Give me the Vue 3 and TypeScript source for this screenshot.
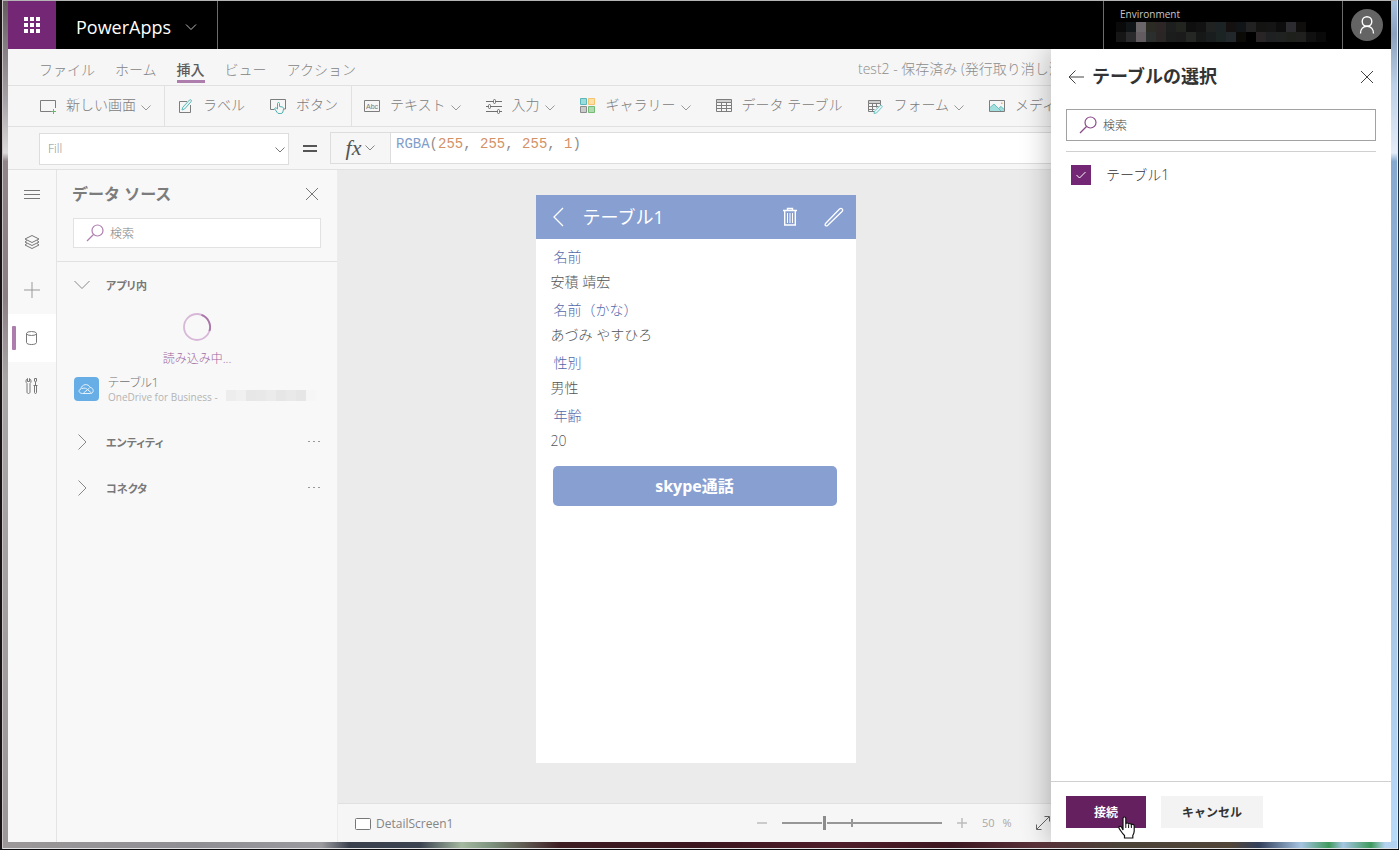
<script setup lang="ts">
import { ref } from 'vue'

type Tool = { id: string; label: string; menu: boolean; divider: boolean }

const menus = ['ファイル', 'ホーム', '挿入', 'ビュー', 'アクション']
const activeMenu = ref('挿入')

const tools: Tool[] = [
  { id: 'screen', label: '新しい画面', menu: true, divider: true },
  { id: 'label', label: 'ラベル', menu: false, divider: false },
  { id: 'button', label: 'ボタン', menu: false, divider: true },
  { id: 'text', label: 'テキスト', menu: true, divider: false },
  { id: 'input', label: '入力', menu: true, divider: false },
  { id: 'gallery', label: 'ギャラリー', menu: true, divider: false },
  { id: 'table', label: 'データ テーブル', menu: false, divider: false },
  { id: 'form', label: 'フォーム', menu: true, divider: false },
  { id: 'media', label: 'メディア', menu: true, divider: false },
]

const rail = [
  { id: 'menu', name: 'メニュー' },
  { id: 'layers', name: 'ツリー ビュー' },
  { id: 'plus', name: '挿入' },
  { id: 'data', name: 'データ ソース' },
  { id: 'tools', name: '詳細ツール' },
]
const activeRail = ref('data')

const groups = ['エンティティ', 'コネクタ']

const fields = [
  { name: '名前', value: '安積 靖宏' },
  { name: '名前（かな）', value: 'あづみ やすひろ' },
  { name: '性別', value: '男性' },
  { name: '年齢', value: '20' },
]

const formula = ref('RGBA(255, 255, 255, 1)')
const tokens = [
  { t: 'RGBA', c: 'fn' },
  { t: '(', c: 'op' },
  { t: '255', c: 'num' },
  { t: ', ', c: 'op' },
  { t: '255', c: 'num' },
  { t: ', ', c: 'op' },
  { t: '255', c: 'num' },
  { t: ', ', c: 'op' },
  { t: '1', c: 'num' },
  { t: ')', c: 'op' },
]

const zoomValue = ref(26)
const checked = ref(true)

const envCells = [
  '#0a0a0a', '#101518', '#6a6568', '#2b2b24', '#2c2626', '#1d1f1f', '#22241f', '#0f0f0f', '#121212', '#202222', '#1b2325',
  '#151110', '#121517', '#222222', '#141513', '#151515', '#0d0d0d', '#2c2c30', '#0f0e0d', '#000000', '#000000',
  '#161617', '#2a2a2c', '#625c60', '#2a2e2d', '#2a2626', '#1b1d1d', '#1a1b1a', '#252725', '#151817', '#1a1d1d', '#1c2323',
  '#21272b', '#0b0a07', '#000000', '#292527', '#1f2021', '#202222', '#1e201c', '#20201e', '#101010', '#090909',
]
const accountCells = ['#ededed', '#f0f0f0', '#e7e7e7', '#e8e8e8', '#ebebeb', '#e6e6e6', '#e9e9e9', '#e6e6e6', '#f6f6f6']
</script>

<template>
  <div class="frame">
    <div class="app">
      <header class="topbar">
        <button class="waffle" aria-label="アプリ起動ツール">
          <svg width="16" height="16" viewBox="0 0 16 16" fill="#fff">
            <path d="M0 0h4v4H0zM6 0h4v4H6zM12 0h4v4h-4zM0 6h4v4H0zM6 6h4v4H6zM12 6h4v4h-4zM0 12h4v4H0zM6 12h4v4H6zM12 12h4v4h-4z" />
          </svg>
        </button>
        <button class="brand">
          PowerApps
          <svg width="12" height="8" viewBox="0 0 12 8" fill="none" stroke="#bbb"><path d="M1 1.5l5 5 5-5" /></svg>
        </button>
        <div class="env">
          <span>Environment</span>
          <div class="env-cells"><i v-for="(c, i) in envCells" :key="i" :style="{ background: c }"></i></div>
        </div>
        <button class="account" aria-label="アカウント">
          <svg width="32" height="32" viewBox="0 0 32 32" fill="none" stroke="#fff" stroke-width="1.4">
            <circle cx="16" cy="16" r="16" fill="#646464" stroke="none" />
            <circle cx="16" cy="12.5" r="4.8" />
            <path d="M9.5 24.5c0-4.4 2.7-7.2 6.500-7.200s6.500 2.800 6.500 7.200" />
          </svg>
        </button>
      </header>

      <nav class="menubar">
        <button v-for="m in menus" :key="m" :class="{ on: m === activeMenu }" @click="activeMenu = m"><span>{{ m }}</span></button>
        <p class="doc">test2 - 保存済み (発行取り消し済み)</p>
      </nav>

      <div class="toolbar">
        <template v-for="t in tools" :key="t.id">
          <button class="tool">
            <svg v-if="t.id === 'screen'" class="ti" width="16" height="16" viewBox="0 0 16 16" fill="none" stroke="#7d7d7d">
              <path d="M11 13.500H.5v-11h15V10" /><path stroke="#6cb56c" d="M13.500 11v5M11 13.500h5" />
            </svg>
            <svg v-else-if="t.id === 'label'" class="ti" width="16" height="16" viewBox="0 0 16 16" fill="none" stroke="#7d7d7d">
              <path d="M10 3.500H2.500v11h11V7" /><path stroke="#5fb8b8" fill="#e4f5f5" d="M5 12l.8-2.800L12.500 2c1.200-1 2.600.4 1.600 1.600L7.600 11z" />
            </svg>
            <svg v-else-if="t.id === 'button'" class="ti" width="16" height="16" viewBox="0 0 16 16" fill="none" stroke="#7d7d7d">
              <path d="M4.500 11.500h-4v-10h15v9.500H14" />
              <path stroke="#4cb0b0" fill="#f6f6f6" d="M7.500 11V5.500c0-1.300 2-1.300 2 0V8.500l3 .6c1 .3 1.200.9 1 1.900l-.6 3c-.3 1-1 1.500-2 1.500H9c-1 0-1.500-.5-2-1.200L4.800 11c-.4-1 .7-1.600 1.500-1z" />
            </svg>
            <svg v-else-if="t.id === 'text'" class="ti" width="16" height="16" viewBox="0 0 16 16" fill="none" stroke="#7d7d7d">
              <path d="M.5 2.500h15v11H.5z" />
              <text x="8" y="11" text-anchor="middle" font-size="7" font-family="Liberation Sans, sans-serif" fill="#777" stroke="none">Abc</text>
            </svg>
            <svg v-else-if="t.id === 'input'" class="ti" width="16" height="16" viewBox="0 0 16 16" fill="none" stroke="#707070">
              <path d="M0 3.500h7M10 3.500h6M0 8.500h2M5 8.500h11M0 13.500h11M14 13.500h2" />
              <rect x="7.500" y="1.500" width="2" height="4" rx="1" /><rect x="2.500" y="6.500" width="2" height="4" rx="1" /><rect x="11.500" y="11.500" width="2" height="4" rx="1" />
            </svg>
            <svg v-else-if="t.id === 'gallery'" class="ti" width="16" height="16" viewBox="0 0 16 16">
              <path fill="#9bdcdc" stroke="#5cb8b8" d="M.5 .5h6v6h-6z" /><path fill="#ffe0a6" stroke="#f6c36e" d="M8.500 .5h6v6h-6z" />
              <path fill="#cbcbcb" stroke="#8c8c8c" d="M.5 8.500h6v6h-6z" /><path fill="#b0dbb0" stroke="#75bb75" d="M8.500 8.500h6v6h-6z" />
            </svg>
            <svg v-else-if="t.id === 'table'" class="ti" width="16" height="16" viewBox="0 0 16 16" fill="none" stroke="#7d7d7d">
              <path fill="#cfcfcf" d="M.5 1.500h15v3H.5z" /><path d="M.5 4.500v9h15v-9M.5 7.500h15M.5 10.500h15M5.500 4.500v9M10.500 4.500v9" />
            </svg>
            <svg v-else-if="t.id === 'form'" class="ti" width="16" height="16" viewBox="0 0 16 16" fill="none" stroke="#7d7d7d">
              <path fill="#cfcfcf" d="M1.500 2.500h12v3h-12z" /><path d="M1.500 5.500v8H7M1.500 8.500h10M1.500 11.500h6M5.500 5.500v8M9.500 5.500v4M13.500 5.500v2" />
              <path stroke="#6fc4c4" fill="#e4f5f5" d="M7 15.500l.6-2.500 5.500-5.300c1.400-1 2.800.4 1.700 1.700L9.500 15z" />
            </svg>
            <svg v-else class="ti" width="16" height="16" viewBox="0 0 16 16" fill="none">
              <path fill="#a3dede" d="M1 13V9.500L5 6l4.500 4.500L12 8l3.500 3.500V13z" /><path stroke="#6ec0c0" d="M1 9.500L5 6l7 7M9.500 10.500L12 8.500l3 3" />
              <path stroke="#7d7d7d" d="M.5 2.500h15v11H.5z" /><path fill="#f0b060" d="M12 4.500h1.500V6H12z" />
            </svg>
            <span>{{ t.label }}</span>
            <svg v-if="t.menu" class="caret" width="10" height="6" viewBox="0 0 10 6" fill="none" stroke="#999"><path d="M.5 .5L5 5 9.500 .5" /></svg>
          </button>
          <i v-if="t.divider" class="tool-divider"></i>
        </template>
      </div>

      <div class="formula">
        <div class="prop">
          <select aria-label="プロパティ"><option>Fill</option></select>
          <svg width="10" height="6" viewBox="0 0 10 6" fill="none" stroke="#777"><path d="M.5 .5L5 5 9.500 .5" /></svg>
        </div>
        <svg class="eq" width="16" height="8" viewBox="0 0 16 8" fill="#555"><path d="M1 0h14v2H1zM1 5h14v2H1z" /></svg>
        <button class="fx" aria-label="関数">
          <em>fx</em>
          <svg width="10" height="6" viewBox="0 0 10 6" fill="none" stroke="#888"><path d="M.5 .5L5 5 9.500 .5" /></svg>
        </button>
        <div class="editor">
          <code aria-hidden="true"><span v-for="(k, i) in tokens" :key="i" :class="k.c">{{ k.t }}</span></code>
          <input v-model="formula" aria-label="数式" spellcheck="false" />
        </div>
      </div>

      <div class="body">
        <nav class="rail">
          <button v-for="r in rail" :key="r.id" :class="{ on: r.id === activeRail }" :aria-label="r.name" @click="activeRail = r.id">
            <svg v-if="r.id === 'menu'" width="16" height="16" viewBox="0 0 16 16" stroke="#777"><path d="M0 4.500h16M0 8.500h16M0 12.500h16" /></svg>
            <svg v-else-if="r.id === 'layers'" width="16" height="16" viewBox="0 0 16 16" fill="none" stroke="#777">
              <path d="M8 1.500L1 5l7 3.500L15 5zM3 6.500L1 8l7 3.500L15 8l-2-1.500M3 9.500L1 11l7 3.500 7-3.500-2-1.500" />
            </svg>
            <svg v-else-if="r.id === 'plus'" width="16" height="16" viewBox="0 0 16 16" stroke="#999"><path d="M0 8h16M8 0v16" /></svg>
            <svg v-else-if="r.id === 'data'" width="16" height="16" viewBox="0 0 16 16" fill="none" stroke="#777">
              <ellipse cx="7.500" cy="3.500" rx="5" ry="2" /><path d="M2.500 3.500v9c0 2.700 10 2.700 10 0v-9" />
            </svg>
            <svg v-else width="16" height="16" viewBox="0 0 16 16" fill="none" stroke="#777">
              <path d="M3.500 .5v3h2v-3c2 1.200 2 3.800.5 5v8.500c0 2-3 2-3 0V5.500C1.500 4.300 1.500 1.700 3.500 .5zM11.500 7.500V4l-1-1V.5h2V3l-1 1M9.500 7.500h4M10.500 7.500v7c0 1.300 2 1.300 2 0v-7" />
            </svg>
          </button>
        </nav>

        <aside class="sources">
          <div class="sources-head">
            <h2>データ ソース</h2>
            <button aria-label="閉じる"><svg width="14" height="14" viewBox="0 0 14 14" stroke="#777"><path d="M1 1l12 12M13 1L1 13" /></svg></button>
          </div>
          <label class="search small">
            <svg width="18" height="18" viewBox="0 0 18 18" fill="none" stroke="#b07fb0" stroke-width="1.200"><circle cx="11.500" cy="6.500" r="5.500" /><path d="M7.500 10.500L1 17" /></svg>
            <input type="text" placeholder="検索" aria-label="検索" />
          </label>
          <button class="group first">
            <svg width="16" height="10" viewBox="0 0 16 10" fill="none" stroke="#888"><path d="M.5 1L8 8.500 15.500 1" /></svg>
            <span>アプリ内</span>
          </button>
          <div class="loading">
            <svg width="28" height="28" viewBox="0 0 28 28" fill="none" stroke-width="1.800">
              <circle cx="14" cy="14" r="13" stroke="#d8b8d8" /><path stroke="#a878a8" d="M18.500 1.800A13 13 0 0 1 26.500 18" />
            </svg>
            <span>読み込み中...</span>
          </div>
          <button class="source">
            <svg width="26" height="26" viewBox="0 0 26 26" fill="none">
              <rect y="1" width="25" height="24" rx="4" fill="#67aee6" />
              <path stroke="#e6f2fb" d="M8.500 17.500c-4 0-4.500-4-1.500-4.500.3-5 7.500-6 9.200-1.500 3.800.2 4 6 .3 6zM8 12.500c3-1 4.500 0 6 1.500l3.500 3M9.500 17l6-5" />
            </svg>
            <span class="source-text">
              <b>テーブル1</b>
              <small>OneDrive for Business - <span class="cells"><i v-for="(c, i) in accountCells" :key="i" :style="{ background: c }"></i></span></small>
            </span>
          </button>
          <div v-for="g in groups" :key="g" class="group-row">
            <button class="group">
              <svg width="16" height="16" viewBox="0 0 16 16" fill="none" stroke="#888"><path d="M4.500 .5L12 8l-7.500 7.500" /></svg>
              <span>{{ g }}</span>
            </button>
            <button class="more" aria-label="その他"><svg width="12" height="4" viewBox="0 0 12 4" fill="#999"><path d="M0 1h2v1H0zM5 1h2v1H5zM10 1h2v1h-2z" /></svg></button>
          </div>
        </aside>

        <main class="stage">
          <div class="canvas">
            <section class="phone">
              <header>
                <svg width="12" height="20" viewBox="0 0 12 20" fill="none" stroke="#fff" stroke-width="1.300"><path d="M11 1L2 10l9 9" /></svg>
                <h1>テーブル1</h1>
                <button aria-label="削除">
                  <svg width="16" height="20" viewBox="0 0 16 20" fill="none" stroke="#fff"><path stroke-width="1.400" d="M1 3.500h14M5.500 3V1.500h5V3M2.700 4v14h10.600V4" /><path d="M5.500 6v10M8 6v10M10.500 6v10" /></svg>
                </button>
                <button aria-label="編集">
                  <svg width="20" height="20" viewBox="0 0 20 20" fill="none" stroke="#fff" stroke-width="1.300"><path d="M1.500 18.500c-.5-.5-.3-1.600.3-2.300L15.500 2c2-1.700 4.200.5 2.500 2.500L3.800 18.200c-.7.600-1.800.8-2.300.3z" /></svg>
                </button>
              </header>
              <dl>
                <template v-for="f in fields" :key="f.name"><dt>{{ f.name }}</dt><dd>{{ f.value }}</dd></template>
              </dl>
              <button class="call">skype通話</button>
            </section>
          </div>
          <footer class="status">
            <button class="crumb">
              <svg width="16" height="12" viewBox="0 0 16 12" fill="#fff" stroke="#777"><rect x=".5" y=".5" width="15" height="11" rx="1" /></svg>
              DetailScreen1
            </button>
            <div class="zoom">
              <button aria-label="縮小"><svg width="10" height="10" viewBox="0 0 10 10" stroke="#bdbdbd" stroke-width="1.500"><path d="M0 5h10" /></svg></button>
              <input v-model="zoomValue" type="range" min="0" max="100" aria-label="ズーム" />
              <button aria-label="拡大"><svg width="10" height="10" viewBox="0 0 10 10" stroke="#bdbdbd" stroke-width="1.500"><path d="M0 5h10M5 0v10" /></svg></button>
              <span class="percent"><span>50</span><span>%</span></span>
              <button aria-label="全画面表示"><svg width="14" height="14" viewBox="0 0 14 14" fill="none" stroke="#666"><path d="M1 13L13 1M8.500 .5h5v5M.5 8.500v5h5" /></svg></button>
            </div>
          </footer>
        </main>
      </div>

      <section class="dialog" role="dialog" aria-labelledby="dialog-title">
        <div class="dialog-head">
          <button aria-label="戻る"><svg width="16" height="14" viewBox="0 0 16 14" fill="none" stroke="#444"><path d="M16 7H1M7.500 .5L1 7l6.500 6.500" /></svg></button>
          <h2 id="dialog-title">テーブルの選択</h2>
          <button aria-label="閉じる"><svg width="14" height="14" viewBox="0 0 14 14" stroke="#444"><path d="M1 1l12 12M13 1L1 13" /></svg></button>
        </div>
        <label class="search large">
          <svg width="18" height="18" viewBox="0 0 18 18" fill="none" stroke="#8a4a8a" stroke-width="1.200"><circle cx="11.500" cy="6.500" r="5.500" /><path d="M7.500 10.500L1 17" /></svg>
          <input type="text" placeholder="検索" aria-label="検索" />
        </label>
        <div class="choices">
          <label class="choice">
            <span class="tick">
              <input v-model="checked" type="checkbox" />
              <svg v-if="checked" width="10" height="8" viewBox="0 0 10 8" fill="none" stroke="#fff"><path d="M.5 4l3 3L9.500 1" /></svg>
            </span>
            テーブル1
          </label>
        </div>
        <div class="dialog-foot">
          <button class="primary">接続</button>
          <button class="cancel">キャンセル</button>
          <svg class="pointer" width="18" height="24" viewBox="0 0 18 24" fill="#fff" stroke="#111" stroke-width="1.200">
            <path d="M5 14V2.500c0-2 2.800-2 2.800 0V8c.3-1.400 2.700-1.300 2.800.3.500-1.200 2.700-1 2.800.6.600-1 2.800-.7 2.800 1.100V15c0 2-.5 3-1.400 4.500V22H6.500v-2.500C5 18 3.500 16 2.500 14.500 1.500 13 .5 12 1 11c.6-1.200 2-.8 2.800.4z" />
            <path fill="none" stroke-width="1" d="M7.800 8v4M10.600 8.500V12M13.400 9.500V12" />
          </svg>
        </div>
      </section>
    </div>
  </div>
</template>

<style>
html, body { margin: 0; }
</style>

<style scoped>
* { box-sizing: border-box; }
.frame {
  min-height: 100vh;
  display: flex;
  padding: 1px 8px 7px;
  font-family: "Open Sans", "Noto Sans CJK JP", sans-serif;
  font-size: 14px;
  font-weight: 300;
  line-height: 20px;
  color: #888;
  border-bottom: 1px solid #0c0c0e;
  background:
    linear-gradient(#1b1518, #1b1518) left / 2px 100% no-repeat,
    linear-gradient(#1c2d42, #1c2d42) right / 1px 100% no-repeat,
    linear-gradient(#c9c5c6, #c9c5c6) 2px 0 / 1px 100% no-repeat,
    linear-gradient(#dfeaf7, #dfeaf7) right 1px top 0 / 1px 100% no-repeat,
    linear-gradient(#e2e2e2, #e2e2e2) bottom / 100% 1px no-repeat,
    linear-gradient(#b4b4b4, #b4b4b4) top / 100% 1px no-repeat,
    linear-gradient(90deg, #9c9899, #8f8e93 14%, #9a9a9f 23%, #3a404c 25%, #3b4250 30%, #a5b8a0 33%, #7f9580 35%, #3d1c22 40%, #3b151d 50%, #4f1d2a 60%, #3c1620 68%, #583038 74%, #4b4238 80%, #514538 88%, #32405c 90%, #a5c4e2 93%, #3f9a5d 95%, #a5c6e4 96%, #3f9a5d 98%, #b4d3f0 99%) bottom / 100% 8px no-repeat,
    linear-gradient(#635b5e, #a8a3a8 12%, #ddd9da 18%, #8f8488 19%, #8b7f84 35%, #aaa6a8 45%, #9d9698) left / 8px 100% no-repeat,
    linear-gradient(#a9c3df, #8aa0bc 4%, #bcd0e6 10%, #e5edf7 18%, #86a9cf 19%, #9dbadb 55%, #b9dbfa) right / 8px 100% no-repeat;
}
.frame button, .frame input, .frame select { font: inherit; color: inherit; border: 0; margin: 0; padding: 0; background: none; border-radius: 0; outline: 0; }
.frame button { display: flex; align-items: center; justify-content: center; white-space: nowrap; cursor: pointer; }
.frame svg { display: block; flex: none; }
h1, h2, p, dl, dd { margin: 0; }
.app { flex: 1; min-width: 0; display: flex; flex-direction: column; position: relative; overflow: hidden; background: #f6f6f6; }

.topbar { display: flex; height: 48px; background: #000; flex: none; }
.frame .waffle { width: 48px; background: #742774; }
.frame .brand { padding: 3px 20px 0; gap: 14px; font-size: 18px; font-weight: 400; color: #fff; border-right: 1px solid #6c6c6c; }
.env { margin-left: auto; width: 240px; padding: 5px 12px 0; border: solid #6c6c6c; border-width: 0 1px; font-size: 10px; font-weight: 400; line-height: 16px; color: #c8c8c8; }
.env span { display: block; padding-left: 4px; }
.env-cells { display: grid; grid-template-columns: repeat(21, 10px); grid-auto-rows: 10px; }
.frame .account { width: 48px; }

.menubar { display: flex; height: 37px; flex: none; padding: 5px 0 0 31px; gap: 20px; border-bottom: 1px solid #e1e1e1; }
.frame .menubar button { align-items: flex-start; padding-top: 6px; color: #858585; }
.menubar button span { height: 23px; }
.frame .menubar .on { color: #5c5c5c; font-weight: 500; }
.menubar .on span { border-bottom: 3px solid #ad7dad; }
.doc { margin-left: auto; width: 533px; padding-top: 5px; white-space: nowrap; color: #8c8c8c; }

.toolbar { display: flex; height: 41px; flex: none; padding-left: 20px; overflow: hidden; border-bottom: 1px solid #e1e1e1; }
.frame .tool { padding: 0 13px 2px 12px; gap: 10px; color: #7c7c7c; }
.frame .tool .ti { margin-top: 2px; }
.frame .tool .caret { margin: 6px 0 0 -5px; }
.tool-divider { flex: none; width: 1px; background: #e1e1e1; }

.formula { display: flex; height: 43px; flex: none; padding: 5px 0 5px 31px; border-bottom: 1px solid #e1e1e1; }
.prop { position: relative; width: 250px; height: 32px; margin-top: 1px; border: 1px solid #ddd; background: #fff; }
.frame .prop select { appearance: none; width: 100%; height: 100%; padding-left: 8px; font-size: 12px; color: #8c8c8c; }
.prop svg { position: absolute; right: 3px; top: 13px; pointer-events: none; }
.eq { margin: 13px 12px 0 13px; }
.frame .fx { width: 60px; gap: 4px; border: 1px solid #ddd; border-width: 1px 0 1px 1px; }
.fx em { font: italic 22px/24px "Liberation Serif", serif; color: #555; }
.editor { position: relative; flex: 1; border: 1px solid #ddd; border-right: 0; background: #fff; }
.editor code { display: block; padding: 1px 0 0 5px; font: 14px/20px "Liberation Mono", monospace; white-space: pre; }
.frame .editor input { position: absolute; inset: 0; width: 100%; padding: 1px 0 9px 5px; font: 14px/20px "Liberation Mono", monospace; color: transparent; caret-color: #555; }
.fn { color: #7f9ecb; }
.num { color: #d39166; }
.op { color: #8d8d8d; }

.body { flex: 1; display: flex; min-height: 0; }
.rail { width: 49px; flex: none; background: #f8f8f8; border-right: 1px solid #e4e4e4; }
.frame .rail button { width: 48px; height: 48px; position: relative; }
.frame .rail .on { background: #fff; }
.rail .on::before { content: ""; position: absolute; left: 4px; top: 12px; width: 4px; height: 24px; border-radius: 1px; background: #ad7dad; }

.sources { width: 281px; flex: none; background: #f8f8f8; border-right: 1px solid #ececec; }
.sources-head { display: flex; height: 48px; align-items: center; justify-content: space-between; padding: 0 18px 0 15px; }
h2 { font-size: 16px; font-weight: 700; color: #7c7c7c; }
.search { display: flex; align-items: center; background: #fff; font-size: 12px; }
.frame .search input { flex: 1; min-width: 0; padding-top: 2px; }
.frame .search input::placeholder { color: inherit; opacity: 1; }
.search.small { height: 30px; margin: 0 16px; padding-left: 12px; gap: 6px; border: 1px solid #e2e2e2; color: #808080; }
.frame .group { height: 46px; padding-left: 17px; gap: 16px; justify-content: flex-start; font-size: 11px; font-weight: 600; color: #787878; font-feature-settings: "palt"; }
.group span { padding-top: 2px; }
.frame .group.first { width: 100%; height: 47px; margin-top: 13px; border-top: 1px solid #e1e1e1; }
.loading { display: flex; flex-direction: column; align-items: center; gap: 8px; padding-top: 5px; height: 67px; font-size: 12px; color: #9c649c; }
.frame .source { padding-left: 17px; gap: 8px; height: 28px; margin-bottom: 16px; }
.source-text { display: flex; flex-direction: column; align-items: flex-start; padding-top: 2px; line-height: 14px; }
.source-text b { font-size: 12px; font-weight: 300; color: #707070; font-feature-settings: "palt"; }
.source-text small { display: flex; gap: 6px; font-size: 10px; font-weight: 400; white-space: pre; color: #b4b4b4; }
.cells { display: flex; height: 11px; }
.cells i { width: 10px; }
.group-row { display: flex; justify-content: space-between; padding-right: 17px; }

.stage { flex: 1; min-width: 0; display: flex; flex-direction: column; margin-right: 338px; }
.canvas { flex: 1; margin-right: -338px; padding: 25px 338px 40px 0; background: #ebebeb; }
.phone { width: 320px; min-height: 568px; margin: 0 auto; background: #fff; }
.phone header { display: flex; height: 44px; align-items: center; padding: 0 12px 0 16px; background: #889fd2; color: #fff; }
.phone h1 { flex: 1; margin-left: 19px; font-size: 18px; font-weight: 400; }
.phone header button + button { margin-left: 26px; }
.phone dl { padding: 5px 15px 0; }
dt { padding-left: 3px; line-height: 26px; color: #5468aa; }
dd { height: 27px; line-height: 24px; color: #555; }
.frame .call { width: 284px; height: 40px; margin: 10px auto 0 17px; border-radius: 5px; background: #889fd2; color: #fff; font-size: 16px; font-weight: 700; }

.status { display: flex; height: 39px; flex: none; align-items: center; justify-content: space-between; padding: 0 3px 0 17px; border-top: 1px solid #e0e0e0; }
.frame .crumb { gap: 5px; font-size: 12px; font-weight: 400; color: #858585; padding-top: 2px; }
.zoom { display: flex; align-items: center; gap: 15px; }
.frame .zoom input { appearance: none; width: 160px; height: 14px; background: linear-gradient(#979797, #979797) 69px center / 2px 8px no-repeat, linear-gradient(#979797, #979797) center / 100% 2px no-repeat; }
.zoom input::-webkit-slider-thumb { appearance: none; width: 5px; height: 14px; border: solid #f6f6f6; border-width: 0 1px; background: #8c8c8c; }
.percent { display: flex; gap: 8px; width: 39px; font-size: 11px; font-weight: 400; color: #a8a8a8; }

.dialog { position: absolute; top: 48px; right: 0; bottom: 0; width: 340px; display: flex; flex-direction: column; background: #fff; color: #333; box-shadow: 0 0 28px rgba(0, 0, 0, .3); clip-path: inset(0 0 0 -40px); }
.dialog-head { display: flex; align-items: center; height: 56px; padding: 0 17px; }
.dialog h2 { flex: 1; margin-left: 8px; padding-bottom: 2px; font-size: 18px; color: #333; }
.search.large { height: 32px; margin: 4px 15px 0; padding-left: 12px; gap: 6px; border: 1px solid #a2a2a2; color: #444; }
.choices { flex: 1; margin: 10px 15px 0; padding: 13px 5px; border-top: 1px solid #d0d0d0; }
.choice { display: flex; align-items: center; gap: 15px; }
.tick { display: grid; place-items: center; }
.tick > * { grid-area: 1 / 1; }
.tick svg { pointer-events: none; z-index: 1; }
.frame .tick input { appearance: none; width: 20px; height: 20px; border: 1px solid #742774; }
.frame .tick input:checked { background: #742774; }
.dialog-foot { position: relative; display: flex; gap: 15px; height: 61px; padding: 14px 15px; border-top: 1px solid #d0d0d0; }
.frame .dialog-foot button { height: 32px; padding-top: 2px; font-size: 12px; font-weight: 600; }
.frame .primary { width: 80px; background: #65205f; color: #fff; }
.frame .cancel { width: 102px; background: #f3f3f3; color: #333; }
.pointer { position: absolute; left: 67px; top: 34px; }
</style>
